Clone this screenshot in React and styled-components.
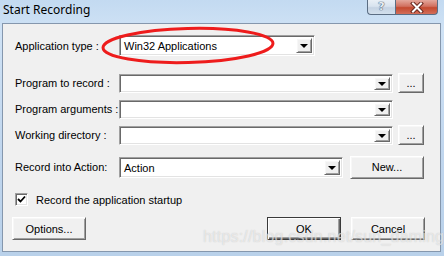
import React from 'react';
import styled, { createGlobalStyle, css } from 'styled-components';

const Global = createGlobalStyle`
  html, body { margin: 0; padding: 0; background: #ffffff; }
  body { font-family: "Liberation Sans", Arial, sans-serif; }
`;

const Window = styled.div`
  position: relative;
  width: 444px;
  height: 256px;
  box-sizing: border-box;
  display: flex;
  flex-direction: column;
  background: linear-gradient(to bottom, #c3daf1 0%, #cfe2f5 12%, #c0d6ee 60%, #b9d1ea 100%);
  overflow: hidden;
`;

const TitleBar = styled.div`
  height: 23px;
  flex: none;
  display: flex;
  align-items: flex-start;
  padding-left: 3px;
`;

const Title = styled.span`
  font-family: "Noto Sans", "Open Sans", sans-serif;
  font-size: 12px;
  line-height: 20px;
  color: #000;
`;

const Captions = styled.div`
  margin-left: auto;
  margin-right: 6px;
  display: flex;
`;

const CapButton = styled.div`
  height: 15px;
  box-sizing: border-box;
  display: flex;
  align-items: center;
  justify-content: center;
  border: 1px solid #5b6d83;
  border-top: none;
  ${(p) =>
    p.$close
      ? css`
          width: 43px;
          border-radius: 0 0 4px 0;
          background: linear-gradient(to bottom, #e4a79c 0%, #d1705f 45%, #c4492f 55%, #d36e5a 100%);
        `
      : css`
          width: 28px;
          border-right: none;
          border-radius: 0 0 0 4px;
          background: linear-gradient(to bottom, #e9eff6 0%, #d8e3ef 45%, #c5d3e3 55%, #d2dfec 100%);
        `}
`;

const HelpGlyph = styled.span`
  font-family: "DejaVu Sans", sans-serif;
  font-weight: bold;
  font-size: 11px;
  line-height: 11px;
  color: #e8eef5;
  text-shadow: 0 0 1px #50607a, 0 0 1px #50607a, 0 0 1px #50607a;
  margin-top: -1px;
`;

const Client = styled.div`
  flex: 1;
  margin: 0 3px 4px 2px;
  background: #f0f0f0;
  border: 1px solid #8597ad;
  padding: 11px 15px 0 9px;
  display: flex;
  flex-direction: column;
`;

const Row = styled.div`
  display: flex;
  align-items: center;
  height: ${(p) => p.$h}px;
  margin-top: ${(p) => p.$mt || 0}px;
  padding-left: ${(p) => (p.$flush ? 0 : 3)}px;
  font-size: 11px;
  color: #000;
`;

const Label = styled.span`
  width: 104px;
  flex: none;
  font-size: 11px;
  white-space: nowrap;
`;

const sunken = css`
  box-sizing: border-box;
  border: 1px solid;
  border-color: #a0a0a0 #ffffff #ffffff #a0a0a0;
  box-shadow: inset 1px 1px #696969, inset -1px -1px #e3e3e3;
  background: #ffffff;
`;

const raised = css`
  box-sizing: border-box;
  border: 1px solid;
  border-color: #ffffff #696969 #696969 #ffffff;
  box-shadow: inset 1px 1px #f7f7f7, inset -1px -1px #a0a0a0;
  background: #f0f0f0;
`;

const Combo = styled.div`
  ${sunken}
  width: ${(p) => p.$w}px;
  height: ${(p) => p.$h || 20}px;
  display: flex;
  align-items: stretch;
  padding: 2px;
`;

const ComboText = styled.span`
  flex: 1;
  padding-left: 2px;
  font-size: 11px;
  line-height: ${(p) => p.$lh || 16}px;
  color: #000;
  white-space: nowrap;
  overflow: hidden;
`;

const DropButton = styled.div`
  ${raised}
  width: 16px;
  flex: none;
  display: flex;
  align-items: center;
  justify-content: center;
`;

const Arrow = styled.span`
  width: 0;
  height: 0;
  border-left: 4px solid transparent;
  border-right: 4px solid transparent;
  border-top: 4px solid #000;
  margin-top: 1px;
`;

const PushButton = styled.div`
  ${raised}
  width: ${(p) => p.$w}px;
  height: ${(p) => p.$h || 23}px;
  margin-left: ${(p) => p.$ml || 0}px;
  display: flex;
  align-items: center;
  justify-content: center;
  font-size: 11px;
  color: #000;
  ${(p) =>
    p.$default &&
    css`
      border-color: #3a3a3a;
      box-shadow: inset 1px 1px #ffffff, inset -1px -1px #696969, inset -2px -2px #a0a0a0;
    `}
`;

const Spacer = styled.div`
  flex: 1;
`;

const CheckBox = styled.div`
  ${sunken}
  width: 13px;
  height: 13px;
  flex: none;
  display: flex;
  align-items: center;
  justify-content: center;
  margin-right: 8px;
`;

const Overlay = styled.svg`
  position: absolute;
  left: 0;
  top: 0;
  pointer-events: none;
`;

const Watermark = styled.span`
  position: absolute;
  left: 203px;
  top: 228px;
  font-family: "Liberation Sans", Arial, sans-serif;
  font-size: 16px;
  letter-spacing: 0.2px;
  color: rgba(255, 255, 255, 0.55);
  text-shadow: 0 0 1px rgba(140, 140, 140, 0.45);
  white-space: nowrap;
  pointer-events: none;
`;

function Dropdown({ w, h, text, lh }) {
  return (
    <Combo $w={w} $h={h}>
      <ComboText $lh={lh}>{text}</ComboText>
      <DropButton>
        <Arrow />
      </DropButton>
    </Combo>
  );
}

export default function App() {
  return (
    <>
      <Global />
      <Window>
        <TitleBar>
          <Title>Start Recording</Title>
          <Captions>
            <CapButton>
              <HelpGlyph>?</HelpGlyph>
            </CapButton>
            <CapButton $close>
              <svg width="14" height="11" viewBox="0 0 14 11">
                <path d="M3 1.5 L11 9.5 M11 1.5 L3 9.5" stroke="#6a2a22" strokeWidth="4" strokeLinecap="square" />
                <path d="M3 1.5 L11 9.5 M11 1.5 L3 9.5" stroke="#ffffff" strokeWidth="2" strokeLinecap="square" />
              </svg>
            </CapButton>
          </Captions>
        </TitleBar>
        <Client>
          <Row $h={21}>
            <Label>Application type :</Label>
            <Dropdown w={196} h={21} text="Win32 Applications" lh={17} />
          </Row>
          <Row $h={20} $mt={17}>
            <Label>Program to record :</Label>
            <Dropdown w={274} h={19} text="" lh={15} />
            <PushButton $w={26} $h={20} $ml={5}>...</PushButton>
          </Row>
          <Row $h={20} $mt={6}>
            <Label>Program arguments :</Label>
            <Dropdown w={274} h={19} text="" lh={15} />
          </Row>
          <Row $h={20} $mt={6}>
            <Label>Working directory :</Label>
            <Dropdown w={274} h={19} text="" lh={15} />
            <PushButton $w={26} $h={20} $ml={5}>...</PushButton>
          </Row>
          <Row $h={24} $mt={10}>
            <Label>Record into Action:</Label>
            <Dropdown w={224} h={21} text="Action" lh={17} />
            <PushButton $w={74} $h={23} $ml={7}>New...</PushButton>
          </Row>
          <Row $h={13} $mt={14}>
            <CheckBox>
              <svg width="9" height="9" viewBox="0 0 9 9">
                <path d="M1 4 L3.5 6.5 L8 1.5" stroke="#000" strokeWidth="1.8" fill="none" />
              </svg>
            </CheckBox>
            <span>Record the application startup</span>
          </Row>
          <Row $h={23} $mt={11} $flush>
            <PushButton $w={74}>Options...</PushButton>
            <Spacer />
            <PushButton $w={74} $default>OK</PushButton>
            <PushButton $w={74} $ml={10}>Cancel</PushButton>
          </Row>
        </Client>
        <Watermark>https://blog.csdn.net/sun_daming</Watermark>
        <Overlay width="444" height="256" viewBox="0 0 444 256">
          <ellipse cx="188" cy="45.5" rx="85" ry="17" fill="none" stroke="#ee1c1c" strokeWidth="3" transform="rotate(-1.5 188 45.5)" />
        </Overlay>
      </Window>
    </>
  );
}
